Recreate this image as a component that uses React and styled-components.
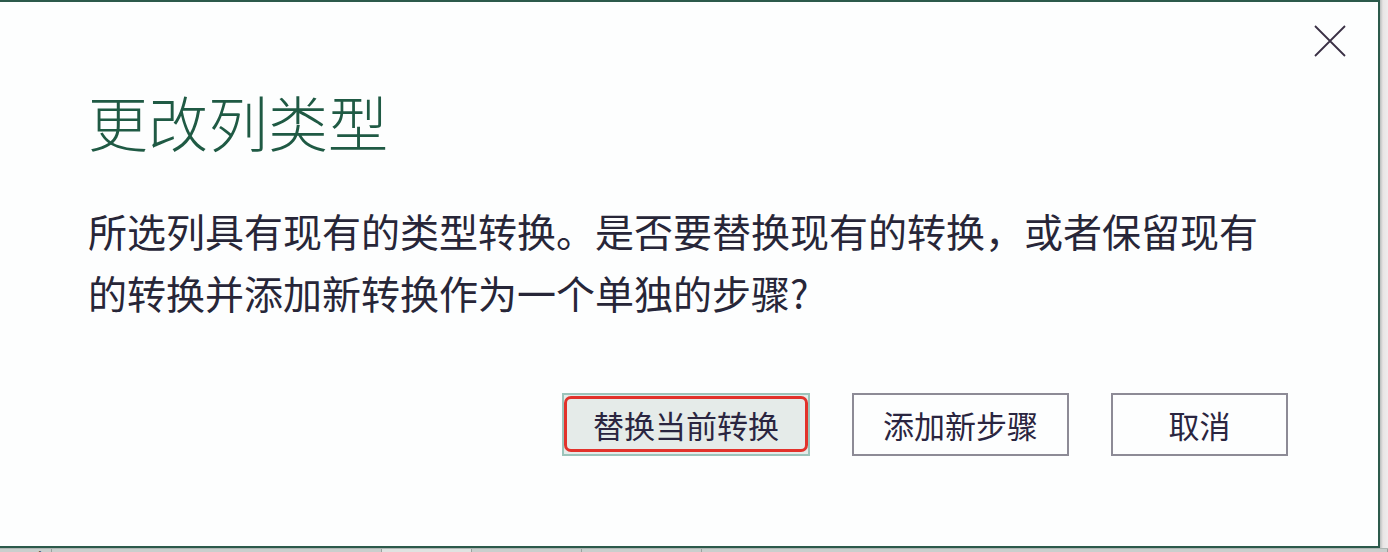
import React from "react"
import styled, { createGlobalStyle } from "styled-components"

const GlobalStyle = createGlobalStyle`
  html, body {
    margin: 0;
    padding: 0;
    background: #d3d8d6;
    overflow: hidden;
  }
  body {
    font-family: "Noto Sans CJK SC", "Noto Sans", sans-serif;
  }
`

const Page = styled.div`
  width: 1388px;
  height: 552px;
  display: flex;
  flex-direction: column;
  overflow: hidden;
`

const Stage = styled.div`
  display: flex;
  height: 548px;
`

const Dialog = styled.section`
  position: relative;
  box-sizing: border-box;
  width: 1380px;
  height: 548px;
  background: #fdfefe;
  border: 2px solid #2c5a4b;
  border-left: none;
  padding: 89px 90px 0 88px;
  display: flex;
  flex-direction: column;
`

const Backdrop = styled.div`
  flex: 1;
  background: linear-gradient(90deg, #b9bdbc 0, #e9e5e5 3px, #efeced 100%);
`

const CloseButton = styled.button`
  position: absolute;
  top: 23px;
  right: 32px;
  width: 32px;
  height: 32px;
  padding: 0;
  border: none;
  background: transparent;
  color: #3a3045;
  cursor: pointer;
  display: flex;

  svg {
    width: 32px;
    height: 32px;
  }
`

const Title = styled.h1`
  margin: 0;
  font-size: 60px;
  line-height: 60px;
  font-weight: 300;
  color: #1f5a44;
`

const Message = styled.p`
  margin: 48px 0 0;
  font-size: 39px;
  line-height: 62px;
  font-weight: 400;
  color: #272638;
`

const Actions = styled.div`
  display: flex;
  justify-content: flex-end;
  gap: 42px;
  margin-top: 70px;
`

const Button = styled.button`
  position: relative;
  box-sizing: border-box;
  height: 63px;
  min-width: 177px;
  padding: 0 29px;
  font-family: inherit;
  font-size: 31px;
  color: #2a2540;
  background: ${p => (p.$primary ? "#e5ebe9" : "#fdfefe")};
  border: 2px solid ${p => (p.$primary ? "#9cc4bb" : "#8d8b96")};
  border-radius: 0;
  cursor: pointer;

  ${p =>
    p.$marked &&
    `
    &::after {
      content: "";
      position: absolute;
      inset: 1px 0 2px 0;
      border: 3px solid #e2322b;
      border-radius: 7px;
      pointer-events: none;
    }
  `}
`

const Strip = styled.div`
  display: flex;
  align-items: flex-start;
  height: 4px;
  overflow: hidden;
  background: #c9cfcd;
  border-top: 1px solid #aeb6b3;
`

const Cell = styled.div`
  box-sizing: border-box;
  width: ${p => p.$w}px;
  height: 4px;
  padding-left: ${p => p.$pad || 0}px;
  border-right: 1px solid #9aa39f;
  background: ${p => p.$bg || "transparent"};
  font-size: 26px;
  line-height: 26px;
  color: #2b2b2b;
  white-space: nowrap;
  overflow: hidden;
  font-style: italic;

  span {
    display: block;
    margin-top: -1px;
  }
`

const CloseIcon = () => (
  <svg viewBox="0 0 32 32" fill="none">
    <path d="M1 1L31 31M31 1L1 31" stroke="currentColor" strokeWidth="1.8" />
  </svg>
)

export default function App() {
  return (
    <>
      <GlobalStyle />
      <Page>
        <Stage>
          <Dialog>
            <CloseButton aria-label="关闭">
              <CloseIcon />
            </CloseButton>
            <Title>更改列类型</Title>
            <Message>
              所选列具有现有的类型转换。是否要替换现有的转换，或者保留现有的转换并添加新转换作为一个单独的步骤?
            </Message>
            <Actions>
              <Button $primary $marked>替换当前转换</Button>
              <Button>添加新步骤</Button>
              <Button>取消</Button>
            </Actions>
          </Dialog>
          <Backdrop />
        </Stage>
        <Strip>
          <Cell $w={52} $pad={26}><span>/</span></Cell>
          <Cell $w={330} />
          <Cell $w={90} $pad={8} $bg="#dfe3e1"><span>WW</span></Cell>
          <Cell $w={110} $pad={14}><span>WWW</span></Cell>
          <Cell $w={120} $pad={16}><span>WVX</span></Cell>
          <Cell $w={686} />
        </Strip>
      </Page>
    </>
  )
}
